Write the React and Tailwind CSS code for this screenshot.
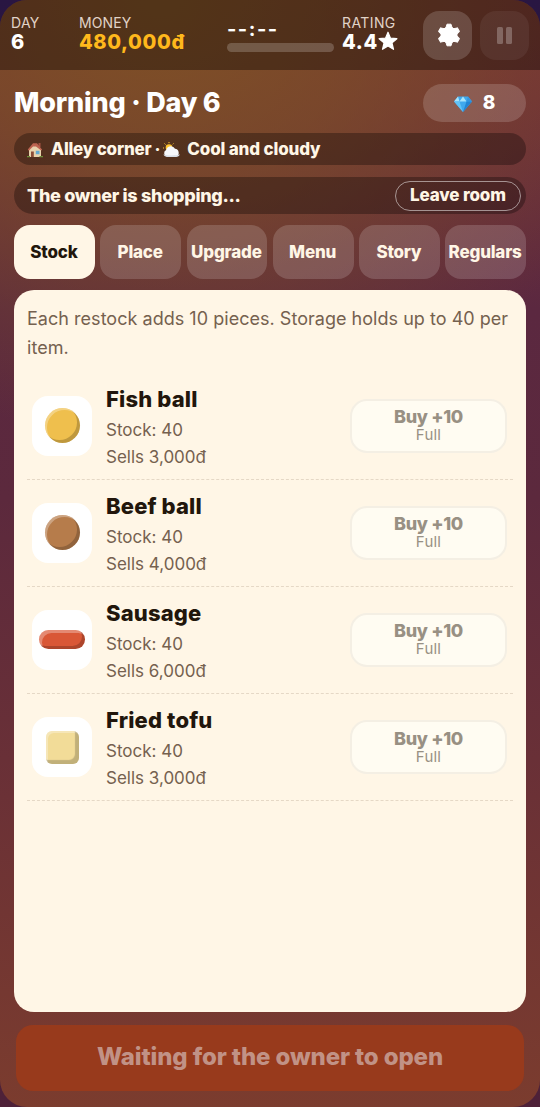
import React from "react";

const rows = [
  { name: "Fish ball", price: "3,000đ", kind: "fish" },
  { name: "Beef ball", price: "4,000đ", kind: "beef" },
  { name: "Sausage", price: "6,000đ", kind: "sausage" },
  { name: "Fried tofu", price: "3,000đ", kind: "tofu" },
];

const shapes = {
  fish: "h-[35px] w-[35px] rounded-full bg-[#efbf4d] shadow-[inset_-3px_-3px_0_rgba(0,0,0,0.2),inset_2px_2px_0_rgba(255,255,255,0.3)]",
  beef: "h-[35px] w-[35px] rounded-full bg-[#b67c4b] shadow-[inset_-3px_-3px_0_rgba(0,0,0,0.2),inset_2px_2px_0_rgba(255,255,255,0.3)]",
  sausage: "h-[19px] w-[46px] rounded-full bg-[#d95736] shadow-[inset_-3px_-3px_0_rgba(0,0,0,0.2),inset_3px_3px_0_rgba(255,255,255,0.3)]",
  tofu: "h-[33px] w-[33px] rounded-[6px] bg-[#f2dc98] shadow-[inset_-4px_-4px_1px_rgba(0,0,0,0.2),inset_2px_2px_0_rgba(255,255,255,0.3)]",
};

function Gear() {
  return (
    <svg width="26" height="26" viewBox="0 0 26 26" fill="#fff" stroke="#fff" strokeWidth="1" strokeLinejoin="round">
      <circle cx="13" cy="13" r="8" />
      <path d="M11 2.200h4l1.500 5h-7z" />
      <path d="M11 2.200h4l1.500 5h-7z" transform="rotate(60 13 13)" />
      <path d="M11 2.200h4l1.500 5h-7z" transform="rotate(120 13 13)" />
      <path d="M11 2.200h4l1.500 5h-7z" transform="rotate(180 13 13)" />
      <path d="M11 2.200h4l1.500 5h-7z" transform="rotate(240 13 13)" />
      <path d="M11 2.200h4l1.500 5h-7z" transform="rotate(300 13 13)" />
    </svg>
  );
}

function Star() {
  return (
    <svg width="20" height="20" viewBox="0 0 20 20" fill="#fff" stroke="#fff" strokeWidth="1.200" strokeLinejoin="round">
      <path d="M10 1.200l2.500 6 6.400.5-4.900 4.200 1.500 6.400L10 14.900l-5.500 3.400L6 11.900 1.100 7.700l6.400-.5z" />
    </svg>
  );
}

function Gem() {
  return (
    <svg width="18" height="16" viewBox="0 0 18 16">
      <path d="M4 .5h10L18 5.500 9 16 0 5.500z" fill="#3fa9ee" />
      <path d="M4 .5L0 5.500h5.500zM9 .5L5.500 5.500h7z" fill="#a6e4fb" />
      <path d="M14 .5l4 5h-5.500z" fill="#3495df" />
      <path d="M0 5.500h5.500L9 16z" fill="#61c3f7" />
      <path d="M18 5.500h-5.500L9 16z" fill="#2385d3" />
    </svg>
  );
}

function House() {
  return (
    <svg width="16" height="16" viewBox="0 0 16 16">
      <path d="M11.500 1h2v4h-2z" fill="#a65242" />
      <path d="M2 7l6-5 6 5v8H2z" fill="#e9d3ad" />
      <path d="M.8 7.500L6 1.200h4L15.200 7.800l-1 .8L9 4.500l-3 0-4.200 4.300z" fill="#bd6450" />
      <path d="M4 9.500h2.800V15H4z" fill="#8b4c36" />
      <path d="M8.800 8.800h3.700v3.400H8.800z" fill="#63a9cf" />
      <path d="M0 14h3v1.300H0zM12.500 14H16v1.300h-3.500z" fill="#70903d" />
    </svg>
  );
}

function Cloud() {
  return (
    <svg width="17" height="16" viewBox="0 0 17 16">
      <circle cx="6" cy="5.500" r="3.300" fill="#ffc42e" />
      <path d="M6 0v1.200M1.500 1.500l1 1M0 6h1M10.500 1.500l-.8.8" stroke="#ffc42e" />
      <path d="M3.500 14.500a3.500 3.500 0 0 1-.3-6.500A4.700 4.700 0 0 1 12 6.800a4 4 0 0 1 1.200 7.700z" fill="#f6f7fa" />
      <path d="M.5 12.300C1.500 15 3.500 15 6 15h7c2 0 3.300-1 3.800-2.700-2.300 1.500-13.500 1.700-16.300 0z" fill="#d9dee6" />
    </svg>
  );
}

function Tab({ children, active }) {
  return (
    <button className={active
      ? "flex h-[54px] min-w-0 flex-1 items-center justify-center rounded-2xl bg-[#fff6e6] pr-px pt-px text-[17px] font-extrabold text-[#22160c]"
      : "flex h-[54px] min-w-0 flex-1 items-center justify-center rounded-2xl bg-white/[0.16] pr-px pt-px text-[17px] font-extrabold text-[#fff6e6]"}>
      <span className="tracking-[-0.2px]">{children}</span>
    </button>
  );
}

export default function App() {
  return (
    <div className="h-[1107px] w-[540px] overflow-hidden bg-[linear-gradient(180deg,#291642,#4e2138)] font-['Inter',sans-serif] text-white">
      <div className="flex h-full flex-col overflow-hidden rounded-[27px] bg-[radial-gradient(ellipse_500px_440px_at_30%_0%,rgba(128,86,34,0.85),rgba(126,82,36,0.65)_40%,rgba(120,70,40,0)_100%),linear-gradient(180deg,#7a3436_0%,#6e303a_12%,#5b2840_28%,#5c293d_45%,#6b3136_72%,#7b3c2e_100%)]">
        <header className="flex h-[70px] shrink-0 bg-black/35 pl-[11px]">
          <div className="w-[68px] pt-[14px]">
            <div className="text-[14px] leading-[18px] tracking-[0.3px] text-[#e1d3c7]">DAY</div>
            <div className="text-[20px] font-extrabold leading-[20px]">6</div>
          </div>
          <div className="w-[148px] pt-[14px]">
            <div className="text-[14px] leading-[18px] tracking-[0.1px] text-[#e1d3c7]">MONEY</div>
            <div className="text-[20px] font-extrabold leading-[20px] tracking-[0.6px] text-[#ffb81c]">480,000đ</div>
          </div>
          <div className="w-[115px] pt-[19px]">
            <div className="h-[24px] text-[20px] font-bold leading-[20px] tracking-[1.5px]">--:--</div>
            <div className="h-[9px] w-[107px] rounded-full bg-white/20" />
          </div>
          <div className="w-[81px] pt-[14px]">
            <div className="text-[14px] leading-[18px] tracking-[0.4px] text-[#e1d3c7]">RATING</div>
            <div className="flex text-[20px] font-extrabold leading-[20px]"><span className="tracking-[0.7px]">4.4</span><span className="-mt-px"><Star /></span></div>
          </div>
          <button className="mt-[11px] flex h-[49px] w-[49px] items-center justify-center rounded-2xl bg-white/[0.16] pb-px pl-[2px]"><Gear /></button>
          <button className="ml-2 mt-[11px] flex h-[49px] w-[49px] items-center justify-center gap-[3px] rounded-2xl bg-white/[0.06]">
            <i className="h-[17px] w-[6px] rounded-[1.5px] bg-white/25" /><i className="h-[17px] w-[6px] rounded-[1.5px] bg-white/25" />
          </button>
        </header>
        <main className="flex min-h-0 flex-1 flex-col px-[14px] pt-[14px]">
          <div className="flex h-[38px] items-center justify-between">
            <h1 className="text-[27px] font-extrabold leading-[34px] tracking-[-0.2px]">Morning · Day 6</h1>
            <div className="flex h-[38px] w-[103px] items-center justify-center gap-[11px] rounded-full bg-white/[0.16] pt-px text-[19px] font-extrabold"><Gem /><span>8</span></div>
          </div>
          <div className="mt-[11px] flex h-8 shrink-0 items-center rounded-full bg-black/30 pl-[13px] pt-px text-[17px] font-extrabold tracking-[-0.2px] text-[#fff6e6]">
            <House /><span className="ml-2">Alley corner</span><span className="mx-[3px]">·</span><Cloud /><span className="ml-[7px] tracking-[-0.15px]">Cool and cloudy</span>
          </div>
          <div className="mt-[12px] flex h-[37px] shrink-0 items-center justify-between rounded-full bg-black/30 pl-[13px] pr-[5px] text-[18px] font-extrabold tracking-[-0.3px] text-[#fff6e6]">
            <span>The owner is shopping...</span>
            <button className="flex h-[30px] w-[126px] items-center justify-center rounded-full border border-white/50 text-[17px] font-extrabold tracking-[-0.15px]">Leave room</button>
          </div>
          <nav className="mt-[11px] flex shrink-0 gap-[5.5px]">
            <Tab active>Stock</Tab><Tab>Place</Tab><Tab>Upgrade</Tab><Tab>Menu</Tab><Tab>Story</Tab><Tab>Regulars</Tab>
          </nav>
          <section className="mt-[11px] h-[722px] shrink-0 rounded-[20px] bg-[#fff6e6] px-[13px] pt-[13.500px] text-[#75614f]">
            <p className="h-[69px] text-[18px] leading-[29px] tracking-[0.03px]">Each restock adds 10 pieces. Storage holds up to 40 per item.</p>
            {rows.map((r) => (
              <div key={r.name} className="flex h-[107.200px] items-center border-b border-dashed border-[#e5d8c6] pl-[5px] pr-[6px]">
                <div className="flex h-[60px] w-[60px] items-center justify-center rounded-2xl bg-white"><div className={shapes[r.kind]} /></div>
                <div className="ml-[14px] flex-1 pt-[4px]">
                  <h2 className="text-[22px] font-extrabold leading-[29px] tracking-[0.15px] text-[#22160c]">{r.name}</h2>
                  <div className="mt-[3px] text-[17px] leading-[27px]">Stock: 40</div>
                  <div className="text-[17px] leading-[27px]">Sells {r.price}</div>
                </div>
                <button className="flex h-[54px] w-[157px] flex-col items-center justify-center rounded-[17px] border-2 border-[#f4efe4] bg-[#fffcf2] text-[#989083]">
                  <span className="text-[18px] font-extrabold leading-[19px] tracking-[-0.35px]">Buy +10</span>
                  <span className="text-[15px] leading-[18px] tracking-[0.2px]">Full</span>
                </button>
              </div>
            ))}
          </section>
          <button className="mx-[2px] mt-[13px] h-[66px] shrink-0 rounded-[17px] bg-[#983a1c] pb-[2px] text-[24px] font-extrabold tracking-[-0.12px] text-[#c19286]">Waiting for the owner to open</button>
        </main>
      </div>
    </div>
  );
}
